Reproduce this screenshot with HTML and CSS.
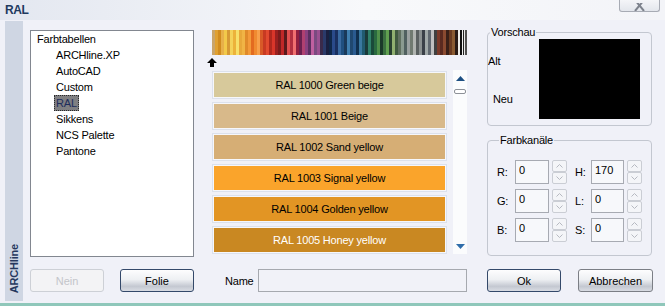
FILE: index.html
```html
<!DOCTYPE html>
<html lang="de">
  <head>
    <meta charset="UTF-8" />
    <title>RAL</title>
    <link rel="stylesheet" href="styles.css">
  </head>
  <body>
    <div class="window">
      <div class="titlebar">
        <span class="title">RAL</span>
        <button class="close" aria-label="Schließen">
          <svg width="12" height="8" viewBox="0 0 12 8"><path d="M1 -3 L10 8 M10 -3 L1 8" stroke="#7d828c" stroke-width="2" fill="none"/></svg>
        </button>
      </div>

      <div class="client">
        <div class="brand"><span>ARCHline</span></div>

        <div class="content">
          <!-- Tables tree -->
          <ul class="tree">
            <li>Farbtabellen
              <ul>
                <li>ARCHline.XP</li>
                <li>AutoCAD</li>
                <li>Custom</li>
                <li><span class="selected">RAL</span></li>
                <li>Sikkens</li>
                <li>NCS Palette</li>
                <li>Pantone</li>
              </ul>
            </li>
          </ul>

          <!-- Palette -->
          <div class="palette">
            <div class="spectrum"></div>
            <svg class="marker" width="10" height="9" viewBox="0 0 10 9"><path d="M5 0 L10 5 L7 5 L7 9 L3 9 L3 5 L0 5 Z" fill="#000"/></svg>
            <div class="swatches">
              <div class="swatch-list">
                <div class="swatch ral-1000">RAL 1000 Green beige</div>
                <div class="swatch ral-1001">RAL 1001 Beige</div>
                <div class="swatch ral-1002">RAL 1002 Sand yellow</div>
                <div class="swatch ral-1003">RAL 1003 Signal yellow</div>
                <div class="swatch ral-1004">RAL 1004 Golden yellow</div>
                <div class="swatch ral-1005">RAL 1005 Honey yellow</div>
              </div>
              <div class="scrollbar">
                <svg width="9" height="5" viewBox="0 0 9 5"><path d="M4.5 0 L9 5 L0 5 Z" fill="#1d4f82"/></svg>
                <div class="thumb"></div>
                <svg class="down" width="9" height="5" viewBox="0 0 9 5"><path d="M0 0 L9 0 L4.5 5 Z" fill="#2f6daa"/></svg>
              </div>
            </div>
          </div>

          <!-- Preview and channels -->
          <div class="side">
            <fieldset class="group preview">
              <legend>Vorschau</legend>
              <div class="preview-labels">
                <span>Alt</span>
                <span class="neu">Neu</span>
              </div>
              <div class="preview-box"></div>
            </fieldset>

            <fieldset class="group channels">
              <legend>Farbkanäle</legend>
              <div class="channel-grid">
                <div class="channel"><label>R:</label><input type="text" value="0" readonly><div class="spin"><span><svg width="7" height="4" viewBox="0 0 7 4"><path d="M0.5 3.5 L3.5 0.5 L6.5 3.5" /></svg></span><span><svg width="7" height="4" viewBox="0 0 7 4"><path d="M0.5 0.5 L3.5 3.5 L6.5 0.5" /></svg></span></div></div>
                <div class="channel"><label>H:</label><input type="text" value="170" readonly><div class="spin"><span><svg width="7" height="4" viewBox="0 0 7 4"><path d="M0.5 3.5 L3.5 0.5 L6.5 3.5" /></svg></span><span><svg width="7" height="4" viewBox="0 0 7 4"><path d="M0.5 0.5 L3.5 3.5 L6.5 0.5" /></svg></span></div></div>
                <div class="channel"><label>G:</label><input type="text" value="0" readonly><div class="spin"><span><svg width="7" height="4" viewBox="0 0 7 4"><path d="M0.5 3.5 L3.5 0.5 L6.5 3.5" /></svg></span><span><svg width="7" height="4" viewBox="0 0 7 4"><path d="M0.5 0.5 L3.5 3.5 L6.5 0.5" /></svg></span></div></div>
                <div class="channel"><label>L:</label><input type="text" value="0" readonly><div class="spin"><span><svg width="7" height="4" viewBox="0 0 7 4"><path d="M0.5 3.5 L3.5 0.5 L6.5 3.5" /></svg></span><span><svg width="7" height="4" viewBox="0 0 7 4"><path d="M0.5 0.5 L3.5 3.5 L6.5 0.5" /></svg></span></div></div>
                <div class="channel"><label>B:</label><input type="text" value="0" readonly><div class="spin"><span><svg width="7" height="4" viewBox="0 0 7 4"><path d="M0.5 3.5 L3.5 0.5 L6.5 3.5" /></svg></span><span><svg width="7" height="4" viewBox="0 0 7 4"><path d="M0.5 0.5 L3.5 3.5 L6.5 0.5" /></svg></span></div></div>
                <div class="channel"><label>S:</label><input type="text" value="0" readonly><div class="spin"><span><svg width="7" height="4" viewBox="0 0 7 4"><path d="M0.5 3.5 L3.5 0.5 L6.5 3.5" /></svg></span><span><svg width="7" height="4" viewBox="0 0 7 4"><path d="M0.5 0.5 L3.5 3.5 L6.5 0.5" /></svg></span></div></div>
              </div>
            </fieldset>
          </div>

          <!-- Bottom row -->
          <div class="btn-row">
            <button class="btn" disabled>Nein</button>
            <button class="btn">Folie</button>
          </div>
          <div class="name-row">
            <label for="name">Name</label>
            <input id="name" type="text">
          </div>
          <div class="btn-row">
            <button class="btn">Ok</button>
            <button class="btn secondary wide">Abbrechen</button>
          </div>
        </div>
      </div>
    </div>
  </body>
</html>
```

FILE: styles.css
```css
/* General styles */
body {
  margin: 0;
  font-family: "Liberation Sans", Arial, sans-serif;
  font-size: 11px;
  letter-spacing: -0.2px;
  color: #000;
  background-color: #fff;
}

.window {
  width: 665px;
  height: 306px;
  display: flex;
  flex-direction: column;
  background-color: #f0f1f8;
  overflow: hidden;
}

/* Title bar */
.titlebar {
  height: 20px;
  flex: none;
  display: flex;
  justify-content: space-between;
  align-items: flex-start;
  background: linear-gradient(to right, #e3e7f0, #f8f9fb 55%, #f3f4f8);
}

.title {
  padding: 3px 0 0 5px;
  line-height: 14px;
  font-size: 12px;
  font-weight: bold;
  letter-spacing: -0.4px;
  color: #1e3a5f;
}

.close {
  width: 41px;
  height: 12px;
  margin-right: 5px;
  padding: 0;
  border: 1px solid #a7abb4;
  border-top: none;
  border-radius: 0 0 3px 3px;
  background: linear-gradient(#f4f5f8, #e3e6ec);
  display: flex;
  justify-content: center;
  align-items: flex-end;
  overflow: hidden;
}

/* Client area */
.client {
  flex: 1;
  display: flex;
  border-bottom: 3px solid #8fc7ba;
}

.brand {
  width: 18px;
  margin: 1px 0 2px 5px;
  padding-bottom: 8px;
  box-sizing: border-box;
  background-color: #cfd6e3;
  display: flex;
  flex-direction: column;
  justify-content: flex-end;
  align-items: center;
}

.brand span {
  writing-mode: vertical-rl;
  transform: rotate(180deg);
  font-size: 11px;
  font-weight: bold;
  letter-spacing: -0.2px;
  color: #26385e;
}

.content {
  padding: 6px 0 0 7px;
  display: grid;
  grid-template-columns: 164px 257px 166px;
  grid-template-rows: 231px 23px;
  gap: 12px 18px;
}

/* Tree */
.tree {
  height: 227px;
  margin: 4px 0 0;
  padding: 0 0 0 6px;
  box-sizing: border-box;
  list-style: none;
  background-color: #fff;
  border: 1px solid #828790;
}

.tree ul {
  margin: 0;
  padding-left: 19px;
  list-style: none;
}

.tree li {
  line-height: 16px;
}

.tree .selected {
  display: inline-block;
  margin-left: -2px;
  padding: 0 1px;
  line-height: 14px;
  background-color: #7f7f82;
  border: 1px dotted #2a2a2a;
  color: #1d2d5c;
}

/* Palette */
.palette {
  padding-top: 4px;
  display: flex;
  flex-direction: column;
  align-items: flex-start;
}

.spectrum {
  width: 255px;
  height: 25px;
  background: linear-gradient(to right,
    #c9a46a 0 3px, #e0a030 3px 6px, #d18b1e 6px 9px, #e7b04a 9px 12px,
    #f2c94a 12px 15px, #d69a35 15px 18px, #f4d25a 18px 21px, #ecb23a 21px 24px,
    #f7e06a 24px 27px, #e8a83a 27px 30px, #f0b445 30px 33px, #e08a2a 33px 36px,
    #f39a3a 36px 39px, #e36b20 39px 42px, #f08a30 42px 45px, #f7a04b 45px 48px,
    #d85a28 48px 51px, #c83a22 51px 54px, #e24a30 54px 57px, #b0281e 57px 60px,
    #d8362a 60px 63px, #9a2020 63px 66px, #7a1c1c 66px 69px, #c02828 69px 72px,
    #5a1a1c 72px 75px, #e05050 75px 78px, #b03040 78px 81px, #f07070 81px 84px,
    #902040 84px 87px, #6a2050 87px 90px, #b04070 90px 93px, #8a4080 93px 96px,
    #5a3060 96px 99px, #c060a0 99px 102px, #7a4a80 102px 105px, #9a5090 105px 108px,
    #3a2a4a 108px 111px, #2a3a6a 111px 114px, #1a2040 114px 117px, #10284a 117px 120px,
    #2a4a8a 120px 123px, #1a3060 123px 126px, #3a6aa0 126px 129px, #205080 129px 132px,
    #1a3a5a 132px 135px, #4080b0 135px 138px, #204870 138px 141px, #2a5a90 141px 144px,
    #103050 144px 147px, #3a78a0 147px 150px, #205a70 150px 153px, #1a3a3a 153px 156px,
    #30806a 156px 159px, #1a4a3a 159px 162px, #2a6a40 162px 165px, #50904a 165px 168px,
    #1a3a2a 168px 171px, #3a7040 171px 174px, #60a050 174px 177px, #284030 177px 180px,
    #90b070 180px 183px, #405a40 183px 186px, #607060 186px 189px, #8a9a90 189px 192px,
    #506060 192px 195px, #9aa0a0 195px 198px, #707a70 198px 201px, #b0b4b0 201px 204px,
    #5a6060 204px 207px, #8a9090 207px 210px, #3a4048 210px 213px, #a0a8a8 213px 216px,
    #606870 216px 219px, #c0c0c0 219px 222px, #404040 222px 225px, #7a3a2a 225px 228px,
    #5a2a20 228px 231px, #8a4a30 231px 234px, #3a2018 234px 237px, #6a3a20 237px 240px,
    #8a5a30 240px 243px, #2a1a14 243px 246px, #f0eee8 246px 248px, #101010 248px 250px,
    #f0f0f0 250px 251px, #202020 251px 252px, #e8e8e8 252px 253px, #505050 253px 255px);
}

.marker {
  display: block;
  margin: 3px 0 3px -5px;
}

.swatches {
  height: 186px;
  display: flex;
  gap: 6px;
}

.swatch-list {
  width: 235px;
  padding-top: 1px;
  display: flex;
  flex-direction: column;
  gap: 3px;
}

.swatch {
  height: 28px;
  box-sizing: border-box;
  border: 1px solid #dce1ec;
  box-shadow: inset 0 0 0 1px #f6f7fb;
  display: flex;
  align-items: center;
  justify-content: center;
}

.ral-1000 { background-color: #d7c99b; }
.ral-1001 { background-color: #d8b98a; }
.ral-1002 { background-color: #d6ae75; }
.ral-1003 { background-color: #faa42b; }
.ral-1004 { background-color: #e29524; }
.ral-1005 { background-color: #c98822; color: #fff; }

.scrollbar {
  width: 14px;
  height: 184px;
  padding: 6px 0 5px;
  box-sizing: border-box;
  background-color: #fbfcfd;
  display: flex;
  flex-direction: column;
  align-items: center;
}

.thumb {
  width: 10px;
  height: 3px;
  margin-top: 8px;
  border: 1px solid #8d9198;
  border-radius: 2px;
  background-color: #fff;
}

.scrollbar .down {
  margin-top: auto;
}

/* Right side groups */
.side {
  display: flex;
  flex-direction: column;
  gap: 8px;
}

.group {
  margin: 0;
  min-width: 0;
  border: 1px solid #c3c7d0;
  border-radius: 4px;
}

.group legend {
  margin-left: 2px;
  padding: 0 1px;
  line-height: 12px;
}

.preview {
  width: 165px;
  box-sizing: border-box;
  padding: 1px 0 6px 0;
  display: flex;
}

.preview-labels {
  width: 51px;
  padding-top: 16px;
  display: flex;
  flex-direction: column;
  align-items: flex-start;
  gap: 26px;
  line-height: 12px;
}

.preview-labels .neu {
  margin-left: 5px;
}

.preview-box {
  width: 101px;
  height: 80px;
  background-color: #000;
}

.channels {
  width: 165px;
  box-sizing: border-box;
  padding: 14px 0 13px 9px;
}

.channel-grid {
  display: grid;
  grid-template-columns: 70px 67px;
  gap: 5px 8px;
}

.channel {
  height: 24px;
  display: flex;
}

.channel label {
  width: 18px;
  line-height: 24px;
}

.channel:nth-child(even) label {
  width: 16px;
}

.channel input {
  width: 34px;
  height: 24px;
  margin: 0 3px 0 0;
  padding: 0 2px 4px 3px;
  box-sizing: border-box;
  border: 1px solid #a7aab2;
  background-color: #f7f8fb;
  font: inherit;
  color: #000;
  outline: none;
}

.channel:nth-child(even) input {
  width: 33px;
}

.spin {
  width: 15px;
  display: flex;
  flex-direction: column;
}

.spin span {
  flex: 1;
  border: 1px solid #cacdd4;
  border-radius: 2px;
  background-color: #f4f5f8;
  display: flex;
  align-items: center;
  justify-content: center;
}

.spin svg path {
  fill: none;
  stroke: #b6b9c1;
  stroke-width: 1;
}

/* Buttons */
.btn-row {
  display: flex;
  justify-content: space-between;
}

.btn {
  width: 74px;
  height: 23px;
  padding: 0;
  border: 1px solid #34496a;
  border-radius: 3px;
  background: linear-gradient(#fdfdfe 0%, #eef0f3 45%, #c4c8d1 78%, #d9dce3 100%);
  font: inherit;
  color: #000;
}

.btn.secondary {
  border-color: #7b7e85;
}

.btn.wide {
  width: 75px;
}

.btn:disabled {
  border-color: #cdd0d6;
  background: #f3f3f5;
  color: #c3c5ca;
}

/* Name field */
.name-row {
  display: flex;
  align-items: center;
}

.name-row label {
  margin-left: 13px;
}

.name-row input {
  width: 209px;
  height: 23px;
  margin: 0 2px 0 auto;
  box-sizing: border-box;
  border: 1px solid #a6a9af;
  background-color: #f1f2f8;
}
```
